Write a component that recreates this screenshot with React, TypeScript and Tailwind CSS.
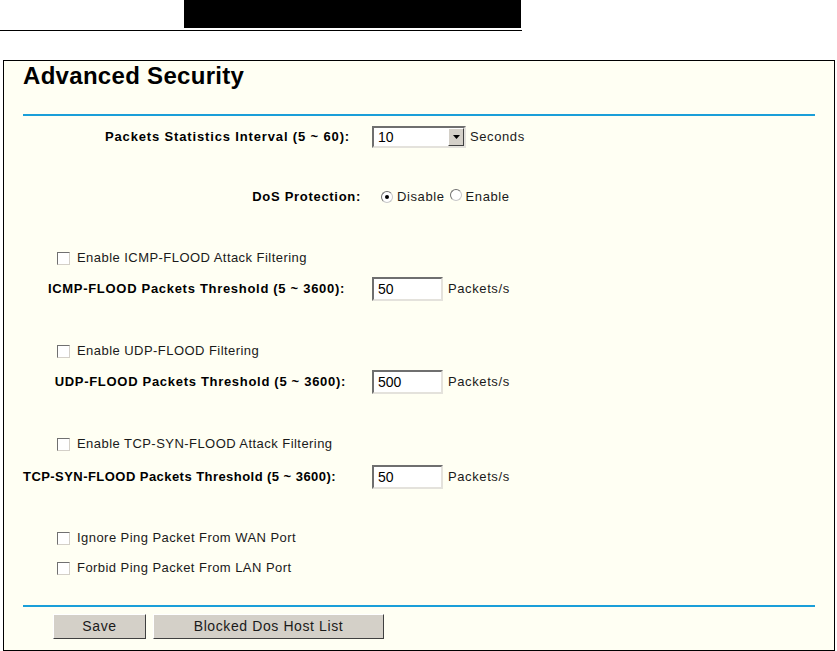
import React from "react";

const font = { fontFamily: '"Liberation Sans", Arial, sans-serif' };

function Checkbox() {
  return (
    <span className="inline-block w-[13px] h-[13px] bg-white border border-t-[#707070] border-l-[#707070] border-r-[#d4d0c8] border-b-[#d4d0c8] shrink-0" />
  );
}

function Radio({ checked }: { checked?: boolean }) {
  return (
    <span className="relative inline-flex items-center justify-center w-[12px] h-[12px] rounded-full bg-white border border-t-[#707070] border-l-[#707070] border-r-[#c8c8c8] border-b-[#c8c8c8] shrink-0">
      {checked && <span className="w-[4px] h-[4px] rounded-full bg-black" />}
    </span>
  );
}

function TextBox({ value }: { value: string }) {
  return (
    <div className="w-[71px] h-[24px] bg-white border-2 border-t-[#6f6f6f] border-l-[#6f6f6f] border-r-[#e4e2dc] border-b-[#e4e2dc] flex items-center pl-[4px] text-[14px] text-black">
      {value}
    </div>
  );
}

function Label({ text, pr, tracking = "tracking-[0.7px]" }: { text: string; pr: string; tracking?: string }) {
  return (
    <div className={`w-[349px] shrink-0 flex justify-end whitespace-nowrap font-bold text-[13px] text-black ${tracking} ${pr}`}>
      {text}
    </div>
  );
}

function CheckRow({ text, mt }: { text: string; mt: string }) {
  return (
    <div className={`flex items-center h-[20px] pl-[34px] ${mt}`}>
      <Checkbox />
      <span className="ml-[7px] text-[13px] tracking-[0.45px] text-[#1a1a1a]">{text}</span>
    </div>
  );
}

function ThresholdRow({
  label,
  value,
  pr,
  mt,
  tracking,
}: {
  label: string;
  value: string;
  pr: string;
  mt: string;
  tracking?: string;
}) {
  return (
    <div className={`flex items-center h-[24px] ${mt}`}>
      <Label text={label} pr={pr} tracking={tracking} />
      <TextBox value={value} />
      <span className="ml-[5px] text-[13px] tracking-[0.6px] text-[#1a1a1a]">Packets/s</span>
    </div>
  );
}

export default function App() {
  return (
    <div className="w-[837px] h-[651px] bg-white overflow-hidden" style={font}>
      <div className="h-[28px] flex">
        <div className="ml-[184px] w-[337px] h-full bg-black" />
      </div>
      <div className="mt-[2px] h-px w-[522px] bg-black" />

      <div className="mt-[29px] ml-[3px] w-[832px] h-[591px] border border-black bg-[#fffff3] flex flex-col pl-[19px]">
        <div className="mt-[2px] h-[26px] leading-[26px] text-[24px] font-bold tracking-[0.3px] text-black">
          Advanced Security
        </div>
        <div className="mt-[25px] h-[2px] w-[792px] bg-[#1a9fd9]" />

        <div className="mt-[10px] flex items-center h-[22px]">
          <Label text="Packets Statistics Interval (5 ~ 60):" pr="pr-[22px]" tracking="tracking-[0.85px]" />
          <div className="w-[94px] h-[22px] bg-white border-2 border-t-[#6f6f6f] border-l-[#6f6f6f] border-r-[#e4e2dc] border-b-[#e4e2dc] flex items-center">
            <span className="flex-1 pl-[4px] text-[14px] text-black">10</span>
            <span className="w-[16px] h-full bg-[#d4d0c8] border border-t-white border-l-white border-r-[#404040] border-b-[#404040] flex items-center justify-center">
              <svg width="7" height="4" viewBox="0 0 7 4">
                <path d="M0 0h7L3.5 4z" fill="#000" />
              </svg>
            </span>
          </div>
          <span className="ml-[4px] text-[13px] tracking-[0.6px] text-[#1a1a1a]">Seconds</span>
        </div>

        <div className="mt-[39px] flex items-center h-[20px]">
          <Label text="DoS Protection:" pr="pr-[11px]" />
          <div className="ml-[9px] flex items-center text-[13px] tracking-[0.6px] text-[#1a1a1a]">
            <Radio checked />
            <span className="ml-[4px]">Disable</span>
            <span className="ml-[5px]">
              <Radio />
            </span>
            <span className="ml-[4px]">Enable</span>
          </div>
        </div>

        <CheckRow text="Enable ICMP-FLOOD Attack Filtering" mt="mt-[41px]" />
        <ThresholdRow label="ICMP-FLOOD Packets Threshold (5 ~ 3600):" value="50" pr="pr-[27px]" mt="mt-[9px]" />

        <CheckRow text="Enable UDP-FLOOD Filtering" mt="mt-[40px]" />
        <ThresholdRow label="UDP-FLOOD Packets Threshold (5 ~ 3600):" value="500" pr="pr-[26px]" mt="mt-[9px]" />

        <CheckRow text="Enable TCP-SYN-FLOOD Attack Filtering" mt="mt-[40px]" />
        <ThresholdRow
          label="TCP-SYN-FLOOD Packets Threshold (5 ~ 3600):"
          value="50"
          pr="pr-[36px]"
          mt="mt-[11px]"
          tracking="tracking-[0.45px]"
        />

        <CheckRow text="Ignore Ping Packet From WAN Port" mt="mt-[39px]" />
        <CheckRow text="Forbid Ping Packet From LAN Port" mt="mt-[10px]" />

        <div className="mt-[27px] h-[2px] w-[792px] bg-[#1a9fd9]" />

        <div className="mt-[7px] flex h-[25px] pl-[30px] gap-[7px]">
          <button className="w-[93px] h-full bg-[#d4d0c8] border border-t-white border-l-white border-r-[#404040] border-b-[#404040] text-[14px] tracking-[0.6px] text-[#1a1a1a]">
            Save
          </button>
          <button className="w-[231px] h-full bg-[#d4d0c8] border border-t-white border-l-white border-r-[#404040] border-b-[#404040] text-[14px] tracking-[0.6px] text-[#1a1a1a]">
            Blocked Dos Host List
          </button>
        </div>
      </div>
    </div>
  );
}
